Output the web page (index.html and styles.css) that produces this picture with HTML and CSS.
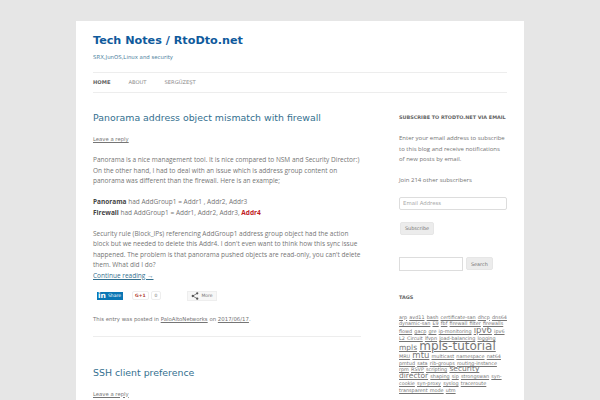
FILE: index.html
```html
<!DOCTYPE html>
<html lang="en">
<head>
  <meta charset="UTF-8" />
  <title>Tech Notes / RtoDto.net</title>
  <link rel="stylesheet" href="styles.css">
</head>
<body>
  <div class="page">
    <header class="site-header">
      <h1 class="site-title">Tech Notes / RtoDto.net</h1>
      <p class="site-desc">SRX,JunOS,Linux and security</p>
      <nav class="nav">
        <a class="nav-current" href="#">HOME</a>
        <a href="#">ABOUT</a>
        <a href="#">SERGÜZEŞT</a>
      </nav>
    </header>

    <div class="columns">
      <main class="content">
        <article class="entry">
          <h2 class="entry-title">Panorama address object mismatch with firewall</h2>
          <a class="reply" href="#">Leave a reply</a>
          <p>Panorama is a nice management tool. It is nice compared to NSM and Security Director:) On the other hand, I had to deal with an issue which is address group content on panorama was different than the firewall. Here is an example;</p>
          <p><b>Panorama</b> had AddGroup1 = Addr1 , Addr2, Addr3<br><b>Firewall</b> had AddGroup1 = Addr1, Addr2, Addr3, <b class="red">Addr4</b></p>
          <p>Security rule (Block_IPs) referencing AddGroup1 address group object had the action block but we needed to delete this Addr4. I don't even want to think how this sync issue happened. The problem is that panorama pushed objects are read-only, you can't delete them. What did I do?<br><a class="more-link" href="#">Continue reading →</a></p>
          <div class="share">
            <span class="btn-linkedin"><span class="in">in</span>Share</span>
            <span class="btn-gplus">G+1</span><span class="count">0</span>
            <span class="btn-more">
              <svg width="8" height="8" viewBox="0 0 9 9"><path d="M7 1.5 2 4.5 7 7.5" fill="none" stroke="#555" stroke-width="0.8"/><circle cx="7" cy="1.5" r="1.3" fill="#555"/><circle cx="2" cy="4.5" r="1.3" fill="#555"/><circle cx="7" cy="7.5" r="1.3" fill="#555"/></svg>
              More
            </span>
          </div>
          <p class="meta">This entry was posted in <a href="#">PaloAltoNetworks</a> on <a href="#">2017/06/17</a>.</p>
        </article>
        <article class="entry-next">
          <h2 class="entry-title">SSH client preference</h2>
          <a class="reply" href="#">Leave a reply</a>
        </article>
      </main>

      <aside class="sidebar">
        <h3 class="widget-title">SUBSCRIBE TO RTODTO.NET VIA EMAIL</h3>
        <p class="widget-text widget-first">Enter your email address to subscribe to this blog and receive notifications of new posts by email.</p>
        <p class="widget-text">Join 214 other subscribers</p>
        <input class="email" type="text" placeholder="Email Address">
        <button class="btn btn-sub">Subscribe</button>
        <div class="search">
          <input class="search-box" type="text">
          <button class="btn">Search</button>
        </div>
        <h3 class="widget-title tags-title">TAGS</h3>
        <div class="tags">
          <a href="#">arp</a> <a href="#">avd11</a> <a href="#">bash</a> <a href="#">certificate-san</a> <a href="#">dhcp</a> <a href="#">dns64</a> <a href="#">dynamic-san</a> <a href="#">E9</a> <a href="#">fbf</a> <a href="#">firewall filter</a> <a href="#">firewalls</a> <a href="#">flowd</a> <a href="#">gacp</a> <a href="#">gre</a> <a href="#">ip-monitoring</a> <a class="t-lg" href="#">ipv6</a> <a href="#">ipv6</a> <a href="#">L2 Circuit</a> <a href="#">lfvpn</a> <a href="#">load-balancing</a> <a href="#">logging</a> <a class="t-xl" href="#">mpls</a> <a class="t-xxl" href="#">mpls-tutorial</a> <a href="#">MRU</a> <a class="t-lg" href="#">mtu</a> <a href="#">multicast</a> <a href="#">namespace</a> <a href="#">nat64</a> <a href="#">pmtud</a> <a href="#">sata</a> <a href="#">rib-groups</a> <a href="#">routing-instance</a> <a href="#">rpm</a> <a href="#">RSVP</a> <a href="#">scripting</a> <a class="t-xl" href="#">security director</a> <a href="#">shaping</a> <a href="#">sip</a> <a href="#">strongswan</a> <a href="#">syn-cookie</a> <a href="#">syn-proxy</a> <a href="#">syslog</a> <a href="#">traceroute</a> <a href="#">transparent mode</a> <a href="#">utm</a>
        </div>
      </aside>
    </div>
  </div>
</body>
</html>
```

FILE: styles.css
```css
body {
  margin: 0;
  height: 400px;
  overflow: hidden;
  background-color: #e6e6e6;
  font-family: "DejaVu Sans", sans-serif;
  color: #757575;
}

a {
  color: #757575;
}

.page {
  width: 448px;
  height: 379px;
  margin: 21px auto 0;
  padding: 0 17px;
  box-sizing: border-box;
  background: white;
  overflow: hidden;
}

.site-title {
  margin: 0;
  padding-top: 13px;
  font-size: 11.2px;
  line-height: 14px;
  color: #0f5a9c;
}

.site-desc {
  margin: 5px 0 0;
  font-size: 5.4px;
  line-height: 8px;
  color: #4d7f9e;
}

.nav {
  display: flex;
  gap: 18px;
  margin-top: 11px;
  height: 19px;
  line-height: 19px;
  font-size: 5.2px;
  border-top: 1px solid #ededed;
  border-bottom: 1px solid #ededed;
}

.nav a {
  text-decoration: none;
  color: #8a8a8a;
}

.nav a.nav-current {
  color: #636363;
  font-weight: bold;
}

.columns {
  display: flex;
  justify-content: space-between;
}

.content {
  width: 268px;
}

.entry {
  padding: 19px 0 12px;
  border-bottom: 1px solid #ededed;
}

.entry-next {
  padding-top: 30px;
}

.entry-title {
  margin: 0;
  font-size: 9.4px;
  line-height: 12px;
  font-weight: normal;
  color: #34708f;
}

.reply {
  display: block;
  margin-top: 11px;
  font-size: 5.3px;
  line-height: 9px;
}

.entry p {
  margin: 10.5px 0 0;
  font-family: "Open Sans", sans-serif;
  font-size: 6.5px;
  line-height: 10.5px;
}

.entry > .reply + p {
  margin-top: 11px;
}

.entry b {
  color: #444;
}

.entry b.red {
  color: #c0191f;
}

.more-link {
  color: #34708f;
}

.share {
  display: flex;
  align-items: center;
  height: 11px;
  margin-top: 9px;
  margin-bottom: 1px;
  font-size: 4.5px;
}

.btn-linkedin {
  display: flex;
  align-items: center;
  gap: 2px;
  width: 26px;
  height: 8px;
  margin-left: 4px;
  background: #0a76b4;
  color: white;
}

.in {
  padding-left: 1px;
  font-size: 7.5px;
  font-weight: bold;
  line-height: 8px;
}

.btn-gplus {
  margin-left: 9px;
  padding: 1px 2px;
  border: 1px solid #eee;
  border-radius: 2px;
  color: #b03a2e;
  font-weight: bold;
}

.count {
  margin-left: 2px;
  padding: 1px 3px;
  border: 1px solid #eee;
  border-radius: 2px;
}

.btn-more {
  display: flex;
  align-items: center;
  gap: 2px;
  height: 8px;
  margin-left: 26px;
  padding: 0 3px;
  border: 1px solid #eee;
  background: #f7f7f7;
}

.entry p.meta {
  margin-top: 13.5px;
  font-family: "DejaVu Sans", sans-serif;
  font-size: 5.4px;
  line-height: 9px;
}

.sidebar {
  width: 108px;
  padding-top: 20px;
}

.widget-title {
  margin: 0;
  font-size: 4.9px;
  line-height: 8px;
  font-weight: bold;
  color: #636363;
  white-space: nowrap;
}

.widget-text {
  margin: 10.5px 0 0;
  font-family: "Open Sans", sans-serif;
  font-size: 6px;
  line-height: 10.5px;
}

.widget-first {
  margin-top: 12px;
}

.email {
  display: block;
  box-sizing: border-box;
  width: 108px;
  height: 13px;
  margin-top: 11px;
  padding: 0 3px;
  border: 1px solid #ddd;
  border-radius: 2px;
  font: 5.4px "DejaVu Sans", sans-serif;
}

.email::placeholder {
  color: #aaa;
}

.btn {
  display: block;
  height: 13px;
  padding: 0 4px;
  border: 1px solid #e6e6e6;
  border-radius: 2px;
  background: #ececec;
  color: #757575;
  font: 4.9px "DejaVu Sans", sans-serif;
}

.btn-sub {
  margin: 12px 0 0 1px;
}

.search {
  display: flex;
  align-items: center;
  gap: 3px;
  margin-top: 22px;
}

.search-box {
  box-sizing: border-box;
  width: 64px;
  height: 14px;
  border: 1px solid #ddd;
}

.tags-title {
  margin-top: 22px;
}

.tags {
  margin-top: 13px;
  font-size: 4.9px;
  line-height: 6.7px;
  word-spacing: 0.6px;
}

.t-lg {
  font-size: 8.5px;
}

.t-xl {
  font-size: 7.5px;
}

.t-xxl {
  font-size: 12px;
  line-height: 10px;
}
```
